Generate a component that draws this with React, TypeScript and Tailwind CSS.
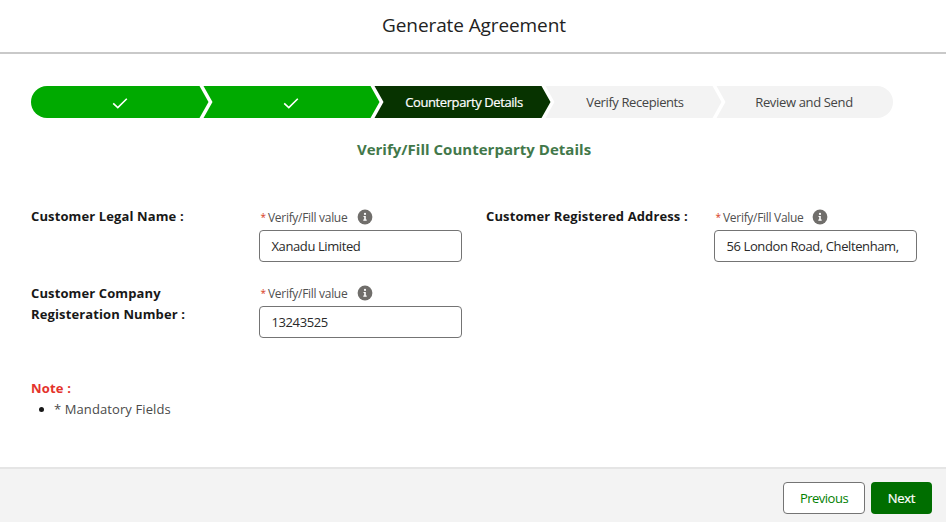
import React from "react";

function Check() {
  return (
    <svg width="16" height="12" viewBox="0 0 16 12" fill="none" aria-hidden="true">
      <path d="M1.2 6.4 L5.8 10.6 L14.8 1.8" stroke="#fff" strokeWidth="1.6" />
    </svg>
  );
}

function InfoIcon() {
  return (
    <svg width="16" height="16" viewBox="0 0 16 16" aria-hidden="true">
      <circle cx="8" cy="8" r="7.4" fill="#706e6b" />
      <circle cx="8" cy="4.9" r="1.1" fill="#fff" />
      <path d="M6.5 7 H8.8 V10.6 H9.7 V11.7 H6.3 V10.6 H7.2 V8 H6.5 Z" fill="#fff" />
    </svg>
  );
}

function Field({ label, value }: { label: string; value: string }) {
  return (
    <div className="w-[203px]">
      <div className="flex h-[22px] items-center">
        <span className="w-[9px] pl-[1.5px] text-[10px] leading-none text-[#d83a20]">*</span>
        <span className="w-[89px] whitespace-nowrap pt-0.5 text-[12px] tracking-[-0.3px] text-[#505050]">{label}</span>
        <InfoIcon />
      </div>
      <div className="mt-0.5 flex h-8 items-center overflow-hidden whitespace-nowrap rounded-[4px] border border-[#747474] bg-white pl-[11.5px] pt-0.5 text-[13px] tracking-[-0.4px] text-[#2a2a2a]">
        {value}
      </div>
    </div>
  );
}

const step = "flex h-8 items-center justify-center whitespace-nowrap text-[13px] ";
const middle =
  "-ml-1.5 w-[177px] [clip-path:polygon(0.5px_0,calc(100%_-_9.5px)_0,calc(100%_-_0.5px)_50%,calc(100%_-_9.5px)_100%,0.5px_100%,9.5px_50%)] ";
const rowLabel = "text-[13px] font-bold leading-[21px] tracking-[0.12px] text-[#181818] ";

export default function App() {
  return (
    <div className="flex h-[522px] w-[946px] flex-col overflow-hidden bg-white font-['Open_Sans','Noto_Sans',sans-serif] text-[#181818]">
      <header className="flex h-[54px] shrink-0 items-center justify-center border-b-2 border-[#c9c9c9] pb-0.5 pl-[2px]">
        <h1 className="text-[19px] tracking-[-0.1px] text-[#222]">Generate Agreement</h1>
      </header>
      <main className="flex-1 pl-[31px] pt-8">
        <div className="flex">
          <div className={step + "w-[178px] rounded-l-full bg-[#00aa00] pt-0.5 [clip-path:polygon(0_0,168.5px_0,177.5px_50%,168.5px_100%,0_100%)]"}>
            <Check />
          </div>
          <div className={step + middle + "bg-[#00aa00] pr-px pt-0.5"}>
            <Check />
          </div>
          <div className={step + middle + "bg-[#073300] pl-[3px] pt-0.5 tracking-[-0.4px] text-white [-webkit-text-stroke:0.2px_white]"}>
            Counterparty Details
          </div>
          <div className={step + middle + "bg-[#f3f3f3] pl-[3px] pt-0.5 tracking-[-0.4px] text-[#444]"}>Verify Recepients</div>
          <div className={step + "-ml-1.5 w-[177px] rounded-r-full bg-[#f3f3f3] pr-px pt-0.5 tracking-[-0.35px] text-[#444] [clip-path:polygon(0.5px_0,100%_0,100%_100%,0.5px_100%,9.5px_50%)]"}>
            Review and Send
          </div>
        </div>
        <h2 className="mt-[19px] w-[886px] text-center text-[15px] font-bold leading-6 tracking-[0.02px] text-[#42784a]">
          Verify/Fill Counterparty Details
        </h2>
        <div className="mt-[45px] grid grid-cols-[228px_227px_228px_203px] gap-y-[20px]">
          <div className={rowLabel}>Customer Legal Name :</div>
          <Field label="Verify/Fill value" value="Xanadu Limited" />
          <div className={rowLabel}>Customer Registered Address :</div>
          <Field label="Verify/Fill Value" value="56 London Road, Cheltenham," />
          <div className={rowLabel + "pt-px"}>
            Customer Company
            <br />
            Registeration Number :
          </div>
          <Field label="Verify/Fill value" value="13243525" />
        </div>
        <div className="mt-10 text-[13px] leading-[21px]">
          <div className="font-bold tracking-[0.2px] text-[#e4332c]">Note :</div>
          <ul className="flex items-center">
            <li className="flex items-center tracking-[0.1px] text-[#4a4a4a]">
              <span className="ml-2 mr-2.5 size-[5px] rounded-full bg-[#181818]" />* Mandatory Fields
            </li>
          </ul>
        </div>
      </main>
      <footer className="flex h-[55px] shrink-0 items-start justify-end gap-1.5 border-t-2 border-[#e5e5e5] bg-[#f3f3f3] pr-3.5 pt-[13px]">
        <button className="h-8 w-[82px] rounded-[4px] border border-[#747474] bg-white pt-px text-[13px] tracking-[-0.5px] text-[#008000]">
          Previous
        </button>
        <button className="h-8 w-[61px] rounded-[4px] bg-[#006e00] pt-px text-[13px] tracking-[-0.3px] text-white [-webkit-text-stroke:0.2px_white]">
          Next
        </button>
      </footer>
    </div>
  );
}
